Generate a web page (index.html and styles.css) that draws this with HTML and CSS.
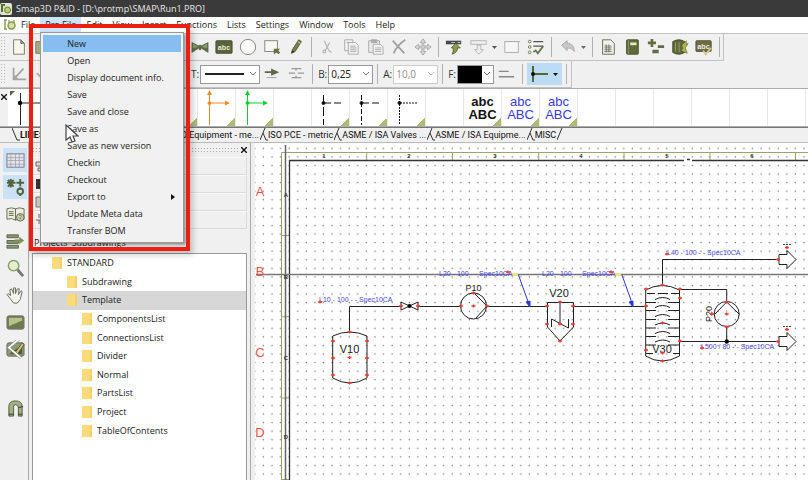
FILE: index.html
```html
<!DOCTYPE html>
<html lang="en">
<head>
<meta charset="utf-8">
<title>Smap3D P&amp;ID</title>
<link rel="stylesheet" href="styles.css">
</head>
<body>
<div class="app">
  <header class="titlebar">
    <svg class="logo" width="12" height="12" viewBox="0 0 12 12"><rect width="12" height="12" rx="2" fill="#dfe5cf"/><path d="M1 2h4M2 2v7" stroke="#5d6b35" stroke-width="2"/><circle cx="7.500" cy="7" r="3" fill="#b9cf6c" stroke="#6c7d35"/></svg>
    <span>Smap3D P&amp;ID - [D:\protmp\SMAP\Run1.PRO]</span>
  </header>

  <nav class="menubar">
    <svg class="logo" width="13" height="12" viewBox="0 0 13 12"><path d="M1 1h3M2 1v9M1 10h3" stroke="#8a9a5a" stroke-width="1.500" fill="none"/><path d="M6 1v3M11 1v3" stroke="#6f7d45"/><circle cx="8.500" cy="6.500" r="3.500" fill="#d5dfa8" stroke="#8a9a4a" stroke-width="1.500"/></svg>
    <button>File</button>
    <div class="menu-root">
      <button class="open">Pro.File</button>
      <div class="menu">
        <button class="active">New</button>
        <button>Open</button>
        <button>Display document info.</button>
        <button>Save</button>
        <button>Save and close</button>
        <button>Save as</button>
        <button>Save as new version</button>
        <button>Checkin</button>
        <button>Checkout</button>
        <button>Export to<svg width="4" height="6" viewBox="0 0 4 6"><path d="M0 0l4 3-4 3z" fill="#111"/></svg></button>
        <button>Update Meta data</button>
        <button>Transfer BOM</button>
      </div>
      <div class="highlight"></div>
      <svg class="cursor" width="14" height="20" viewBox="0 0 14 20"><path d="M1 1v15l4-3 2 5 3-1-2-5h5z" fill="#fff" stroke="#444" stroke-width="1.200"/></svg>
    </div>
    <button>Edit</button>
    <button>View</button>
    <button>Insert</button>
    <button>Functions</button>
    <button>Lists</button>
    <button>Settings</button>
    <button>Window</button>
    <button>Tools</button>
    <button>Help</button>
  </nav>

  <div class="toolbar first">
    <i class="grip"></i>
    <button class="tool" aria-label="New"><svg viewBox="0 0 20 20"><path d="M4 2h8l4 4v12H4z" fill="#f7f7ee" stroke="#74795f"/><path d="M12 2v4h4z" fill="#8d9470" stroke="#74795f"/></svg></button>
    <button class="tool" aria-label="Open"><svg viewBox="0 0 20 20"><path d="M2 4h6l2 2h7v11H2z" fill="#a5ad83" stroke="#6f7650"/></svg></button>
    <i class="gap-wide"></i>
    <button class="tool" aria-label="Valve"><svg viewBox="0 0 20 20"><path d="M1 5l8 4V8h2v1l8-4v11l-8-5v2H9v-2l-8 5z" fill="#5f7049" stroke="#465236" stroke-width=".6"/><path d="M2 6l6 4-6 1zM18 6l-6 4 6 1z" fill="#8b9c75"/></svg></button>
    <button class="tool" aria-label="Text"><svg viewBox="0 0 20 20"><rect x="1" y="3" width="18" height="14" rx="1" fill="#59643c" stroke="#454e2d"/><text x="10" y="13" class="glyph" fill="#e9edd6">abc</text></svg></button>
    <button class="tool" aria-label="Circle"><svg viewBox="0 0 20 20"><circle cx="10" cy="10" r="8.500" fill="#fbfbf8" stroke="#7d8073"/></svg></button>
    <button class="tool" aria-label="Area"><svg viewBox="0 0 20 20"><rect x="2" y="3" width="14" height="12" fill="#f7f7f3" stroke="#7b8072"/><path d="M12 12h7l-2 2 2 2-2 2-2-2-3 2z" fill="#64713f"/></svg></button>
    <button class="tool" aria-label="Pencil"><svg viewBox="0 0 20 20"><path d="M5 17l1-4 7-11 3 2-7 11z" fill="#78814b" stroke="#4c5431"/><path d="M5 17l1-3 2 1z" fill="#222"/><path d="M12 4l3 2" stroke="#ddd"/></svg></button>
    <i class="sep"></i>
    <button class="tool" aria-label="Cut"><svg viewBox="0 0 20 20" fill="none" stroke="#b4b4b4" stroke-width="1.300"><path d="M7 3l5 11M13 5L8 14"/><circle cx="7" cy="15" r="1.500"/><path d="M12 14l3 2"/></svg></button>
    <button class="tool" aria-label="Copy"><svg viewBox="0 0 20 20" fill="#f2f2f2" stroke="#a8a8a8"><path d="M3 2h9v12H3z"/><path d="M7 5h8l3 3v10H7z"/><path d="M9 9h6M9 11h7M9 13h7M9 15h7M5 5h4"/></svg></button>
    <button class="tool" aria-label="Paste"><svg viewBox="0 0 20 20" fill="#e8e8e8" stroke="#a8a8a8"><path d="M3 3h12v13H3z"/><path d="M6 2h6v3H6z" fill="#aaa"/><path d="M8 7h8l3 3v8H8z" fill="#f4f4f4"/><path d="M10 11h7M10 13h7M10 15h7"/></svg></button>
    <button class="tool" aria-label="Delete"><svg viewBox="0 0 20 20" fill="none" stroke="#a0a0a0" stroke-width="2"><path d="M3 3l13 14M17 2Q8 8 4 17"/></svg></button>
    <button class="tool" aria-label="Move"><svg viewBox="0 0 20 20"><path d="M10 1l3 4h-2v4h4V7l4 3-4 3v-2h-4v4h2l-3 4-3-4h2v-4H5v2l-4-3 4-3v2h4V5H7z" fill="#d8d8d8" stroke="#a5a5a5"/></svg></button>
    <i class="sep"></i>
    <button class="tool" aria-label="Import"><svg viewBox="0 0 20 20"><rect x="1" y="3" width="17" height="4" fill="#45484c"/><path d="M7 5h4M14 5h3" stroke="#ccd"/><path d="M12 6l5 5h-3q0 5-6 7 2-3 1-7H7z" fill="#8e9d45" stroke="#59652c"/></svg></button>
    <button class="tool near" aria-label="Export"><svg viewBox="0 0 20 20" fill="#eee" stroke="#b2b2b2"><rect x="1" y="3" width="17" height="4"/><path d="M8 8h4v5h3l-5 5-5-5h3z"/></svg><svg class="caret" viewBox="0 0 5 3"><path d="M0 0h5L2.500 3z" fill="#555"/></svg></button>
    <button class="tool" aria-label="Frame"><svg viewBox="0 0 20 20" fill="#f6f6f6" stroke="#aaa"><rect x="2" y="4" width="15" height="12"/><path d="M2 4h17" stroke-dasharray="2 1"/></svg></button>
    <button class="tool" aria-label="Check list"><svg viewBox="0 0 20 20" fill="none" stroke="#68744b"><circle cx="3" cy="4" r="1.500"/><circle cx="3" cy="10" r="1.500"/><circle cx="3" cy="16" r="1.500"/><path d="M7 4h11M7 9h11M7 15h2" stroke="#555" stroke-width="1.500"/><path d="M9 13l3 4 6-8" stroke-width="2"/></svg></button>
    <i class="sep"></i>
    <button class="tool near" aria-label="Undo"><svg viewBox="0 0 20 20"><path d="M3 8l6-5v3q8 0 8 9-3-5-8-4v3z" fill="#c9c9c9" stroke="#a4a4a4"/></svg><svg class="caret" viewBox="0 0 5 3"><path d="M0 0h5L2.500 3z" fill="#666"/></svg></button>
    <i class="sep"></i>
    <button class="tool" aria-label="Sheet"><svg viewBox="0 0 20 20"><path d="M4 2h9l4 4v12H4z" fill="#f1f1ea" stroke="#5e6350"/><path d="M6 9h8M6 11h8M6 13h8M6 15h8M8 7v9M11 7v9" stroke="#59604d" stroke-width=".8"/></svg></button>
    <button class="tool" aria-label="Catalog"><svg viewBox="0 0 20 20"><rect x="4" y="2" width="13" height="16" rx="1" fill="#5e6b38" stroke="#434d28"/><rect x="8" y="5" width="7" height="3" fill="#e3e7d2"/><path d="M6 2v16" stroke="#8d9a60"/></svg></button>
    <button class="tool" aria-label="Symbols"><svg viewBox="0 0 20 20" fill="#616e40"><path d="M4 1h3v3h3v3H7v3H4V7H1V4h3zM12 8h7v3h-7zM6 13h7v4H6z"/></svg></button>
    <button class="tool" aria-label="Database"><svg viewBox="0 0 20 20"><path d="M2 4q7-4 13 0v12q-6 4-13 0z" fill="#5f6a3b" stroke="#39421f"/><path d="M5 5v10M9 5v11" stroke="#97a373"/><path d="M12 8l5-5v4l2-1-3 5 2 6-7-3 2-2z" fill="#b5b04c" stroke="#4b5424" stroke-width=".6"/></svg></button>
    <button class="tool" aria-label="Spelling"><svg viewBox="0 0 20 20"><rect x="1" y="3" width="17" height="12" rx="1" fill="#6d6a44" stroke="#58552f"/><text x="9.500" y="12" class="glyph" fill="#eee">abc</text><path d="M9 14l3 4 6-7" fill="none" stroke="#d4c689" stroke-width="2"/></svg></button>
    <i class="sep"></i>
  </div>

  <div class="toolbar second">
    <i class="grip"></i>
    <button class="tool" aria-label="Angle"><svg viewBox="0 0 20 20" fill="none" stroke="#a5a5a5" stroke-width="2"><path d="M4 3v13h14M4 16L15 4M8 16l-3-4"/></svg></button>
    <button class="tool" aria-label="Line"><svg viewBox="0 0 20 20" fill="none" stroke="#aaa" stroke-width="2"><path d="M3 9l6 6L18 4"/></svg></button>
    <i class="gap-type"></i>
    <label for="type">T:</label>
    <span class="combo w-type"><select id="type"><option aria-label="Solid"></option></select><svg class="line" viewBox="0 0 39 2"><path d="M0 1h39" stroke="#222" stroke-width="2"/></svg><svg class="chev" viewBox="0 0 6 4"><path d="M0 0l3 3 3-3" fill="none" stroke="#777"/></svg></span>
    <button class="tool arrow" aria-label="Line start"><svg viewBox="0 0 20 20"><path d="M2 7h7V4l9 4-9 4V9H2z" fill="#5c6745"/><path d="M4 14h11" stroke="#999"/></svg></button>
    <button class="tool" aria-label="Line gaps"><svg viewBox="0 0 20 20" fill="none" stroke="#999" stroke-width="1.500"><path d="M5 4h11M2 9h7M12 9h7M5 14h11M10 4v2M10 12v3"/></svg></button>
    <i class="sep"></i>
    <label for="width">B:</label>
    <span class="combo"><select id="width"><option>0,25</option></select><svg class="chev" viewBox="0 0 6 4"><path d="M0 0l3 3 3-3" fill="none" stroke="#777"/></svg></span>
    <i class="sep"></i>
    <label for="height">A:</label>
    <span class="combo off"><select id="height" disabled><option>10,0</option></select><svg class="chev" viewBox="0 0 6 4"><path d="M0 0l3 3 3-3" fill="none" stroke="#bbb"/></svg></span>
    <i class="sep"></i>
    <label for="color">F:</label>
    <span class="combo w-color"><select id="color"><option aria-label="Black"></option></select><i class="swatch"></i><svg class="chev" viewBox="0 0 6 4"><path d="M0 0l3 3 3-3" fill="none" stroke="#777"/></svg></span>
    <button class="tool" aria-label="Offset"><svg viewBox="0 0 20 20" stroke="#888" stroke-width="1.500"><path d="M2 7h11M2 13h17"/></svg></button>
    <i class="sep"></i>
    <button class="split" aria-label="Connection"><svg width="18" height="16" viewBox="0 0 18 16"><path d="M3 0v16M3 8h15" stroke="#556536" stroke-width="2"/><circle cx="3" cy="8" r="2" fill="#111"/></svg><svg class="caret" viewBox="0 0 5 3"><path d="M0 0h5L2.500 3z" fill="#111"/></svg></button>
    <i class="sep"></i>
  </div>

  <div class="palette">
    <button class="close" aria-label="Close palette"><svg width="6" height="6" viewBox="0 0 6 6"><path d="M0 0l6 6M6 0L0 6" stroke="#111" stroke-width="1.300"/></svg></button>
    <div class="cells">
      <button class="cell" aria-label="Line"><svg viewBox="0 0 38 38"><path d="M2 2h5l-5 5z" fill="#5d6643"/><path d="M12.500 4v32M12 14h20" stroke="#222"/><circle cx="12" cy="14" r="2.200"/></svg></button>
      <button class="cell"></button>
      <button class="cell"></button>
      <button class="cell"></button>
      <button class="cell marked"></button>
      <button class="cell marked" aria-label="Orange line"><svg viewBox="0 0 38 38" stroke="#f08a24" fill="#f08a24"><path d="M11.500 6v30M11 14h17"/><path d="M11.500 1l2.500 5H9zM32 14l-5-2.500v5z" stroke="none"/><circle cx="11.500" cy="14" r="1.500"/></svg></button>
      <button class="cell marked" aria-label="Green line"><svg viewBox="0 0 38 38" stroke="#0cce2c" fill="#0cce2c"><path d="M11.500 6v30M11 14h17"/><path d="M11.500 1l2.500 5H9zM32 14l-5-2.500v5z" stroke="none"/><circle cx="11.500" cy="14" r="1.500"/></svg></button>
      <button class="cell"></button>
      <button class="cell marked" aria-label="Long dash line"><svg viewBox="0 0 38 38" stroke="#111"><path d="M11.500 6v30" stroke-dasharray="9 3"/><path d="M12 14h17" stroke-dasharray="7 3"/><circle cx="11.500" cy="14" r="1.500"/></svg></button>
      <button class="cell marked" aria-label="Dash line"><svg viewBox="0 0 38 38" stroke="#111"><path d="M11.500 6v30" stroke-dasharray="5 2"/><path d="M12 14h17" stroke-dasharray="7 3"/><circle cx="11.500" cy="14" r="1.500"/></svg></button>
      <button class="cell marked" aria-label="Dotted line"><svg viewBox="0 0 38 38" stroke="#111"><path d="M11.500 6v30M12 14h17" stroke-dasharray="2 1"/><circle cx="11.500" cy="14" r="1.500"/></svg></button>
      <button class="cell"></button>
      <button class="cell marked word bold">abc<br>ABC</button>
      <button class="cell marked word blue">abc<br>ABC</button>
      <button class="cell marked word blue">abc<br>ABC</button>
      <button class="cell"></button><button class="cell"></button><button class="cell"></button><button class="cell"></button><button class="cell"></button><button class="cell"></button>
    </div>
  </div>

  <div class="tabs">
    <svg class="slope" viewBox="0 0 8 13"><path d="M0 0l5 12h3" fill="none" stroke="#333"/></svg>
    <button class="tab lines"><b>LINES</b></button>
    <button class="tab">ISO Equipment - me...</button>
    <svg class="slope" viewBox="0 0 8 13"><path d="M0 12L5 0M3 5l3 7h2" fill="none" stroke="#333"/></svg>
    <button class="tab">ISO PCE - metric</button>
    <svg class="slope" viewBox="0 0 8 13"><path d="M0 12L5 0M3 5l3 7h2" fill="none" stroke="#333"/></svg>
    <button class="tab">ASME / ISA Valves ...</button>
    <svg class="slope" viewBox="0 0 8 13"><path d="M0 12L5 0M3 5l3 7h2" fill="none" stroke="#333"/></svg>
    <button class="tab">ASME / ISA Equipme...</button>
    <svg class="slope" viewBox="0 0 8 13"><path d="M0 12L5 0M3 5l3 7h2" fill="none" stroke="#333"/></svg>
    <button class="tab">MISC</button>
    <svg class="slope" viewBox="0 0 8 13"><path d="M0 12L5 0" fill="none" stroke="#333"/></svg>
  </div>

  <main class="work">
    <aside class="rail">
      <button class="on" aria-label="Grid"><svg viewBox="0 0 20 20"><rect x="1" y="3" width="18" height="14" fill="#e3e3ec" stroke="#777a82"/><path d="M1 7h18M1 10h18M1 14h18M5 3v14M10 3v14M14 3v14" stroke="#a0a0aa" stroke-width=".8"/></svg></button>
      <button class="on" aria-label="Snap"><svg viewBox="0 0 20 20" fill="none" stroke="#52633c" stroke-width="2"><path d="M5 1v9M1 5h9M2 2l6 7M8 2L2 9M15 1v8M11 5h8" /><circle cx="15" cy="14" r="3"/><path d="M15 10v2M15 17v2"/></svg></button>
      <button aria-label="Help"><svg viewBox="0 0 20 20" fill="#eceddf" stroke="#646b51"><path d="M1 4q5-2 9 0 4-2 9 0v11q-5-2-9 1-4-3-9-1z"/><path d="M10 4v12M3 7h5M3 9h5M3 11h5"/><circle cx="15" cy="13" r="4" fill="#c7cdaa"/><path d="M14 11q2-1 2 1l-1 1v2"/></svg></button>
      <button aria-label="Insert row"><svg viewBox="0 0 20 20"><path d="M1 3h12v3H1zM1 9h12v3H1zM1 14h12v3H1z" fill="#8b967a" stroke="#5c6748"/><path d="M9 8h5V5l5 4-5 4v-3H9z" fill="#7b9050"/></svg></button>
      <button aria-label="Zoom"><svg viewBox="0 0 20 20"><path d="M12 11l6 7" stroke="#777" stroke-width="3"/><circle cx="8" cy="7" r="5.500" fill="#e5efc8" stroke="#8c9a72" stroke-width="1.500"/></svg></button>
      <button aria-label="Pan"><svg viewBox="0 0 20 20"><path d="M5 14L1 9l1-1 3 2-1-6 2-1 2 5V2h2v6l2-5h2l-1 6 3-4 1 1-2 8-3 4H8z" fill="#f4f4ec" stroke="#686d5b"/></svg></button>
      <button aria-label="View"><svg viewBox="0 0 20 20"><rect x="1" y="3" width="18" height="14" rx="2" fill="#6b7a50" stroke="#777"/><path d="M3 5h14v3L3 14z" fill="#b3c48b"/></svg></button>
      <button aria-label="Edit view"><svg viewBox="0 0 20 20"><rect x="1" y="3" width="18" height="14" rx="2" fill="#8c9c70" stroke="#666"/><path d="M3 15L17 5v10z" fill="#4f5e38"/><path d="M9 14L17 3l2 2-7 10z" fill="#d7c070" stroke="#555"/><path d="M15-2L3 8l13 11" fill="none" stroke="#888" stroke-width="3"/><path d="M15-2L3 8l13 11" fill="none" stroke="#fff" stroke-width="1.800"/></svg></button>
      <button class="apart" aria-label="Magnet"><svg viewBox="0 0 20 20"><path d="M3 18V8q0-6 7-6t7 6v10h-4V9q0-3-3-3T8 9v9z" fill="#a6b085" stroke="#515b3b"/><path d="M3 16h5M13 16h4M13 9l5-1" stroke="#333"/></svg></button>
    </aside>

    <section class="panel">
      <div class="panel-head"><i></i><button aria-label="Close panel"><svg width="6" height="6" viewBox="0 0 7 7"><path d="M0 0l7 7M7 0L0 7" stroke="#111" stroke-width="1.600"/></svg></button></div>
      <div class="strip"><svg width="8" height="12" viewBox="0 0 8 12"><path d="M1 2h5v4H1zM3 8h5v3H3z" fill="#ddd" stroke="#666"/></svg></div>
      <div class="strip"><svg width="8" height="12" viewBox="0 0 8 12"><path d="M1 1h7v10H1z" fill="#333"/></svg></div>
      <div class="strip"><svg width="8" height="12" viewBox="0 0 8 12"><path d="M1 1h7v10H1z" fill="#c4c9b9" stroke="#777"/></svg></div>
      <div class="strip"><svg width="8" height="12" viewBox="0 0 8 12"><path d="M4 0v4M1 6h7M4 6v4" stroke="#666" fill="none"/></svg></div>
      <div class="panel-tabs"><button>Projects</button><button class="current">Subdrawings</button></div>
      <ul class="tree">
        <li><i></i>STANDARD</li>
        <li class="l1"><i></i>Subdrawing</li>
        <li class="l1 sel"><i></i>Template</li>
        <li class="l2"><i></i>ComponentsList</li>
        <li class="l2"><i></i>ConnectionsList</li>
        <li class="l2"><i></i>Divider</li>
        <li class="l2"><i></i>Normal</li>
        <li class="l2"><i></i>PartsList</li>
        <li class="l2"><i></i>Project</li>
        <li class="l2"><i></i>TableOfContents</li>
      </ul>
    </section>

    <section class="sheet">
      <svg class="drawing" width="100%" height="100%">
        <defs>
          <pattern id="dots" x="293.600" y="169.700" width="8.580" height="8.570" patternUnits="userSpaceOnUse"><rect x="3.500" y="3.700" width="1.300" height="1.300" fill="#777"/></pattern>
          <g id="port"><path d="M-2 0h4M0-1.500v3" stroke="#f03a30" stroke-width="1.300"/></g>
          <g id="flag"><path d="M-8-5H0v-4l9 9-9 9V5h-8z" fill="#fff" stroke="#222"/><path d="M-4-15h8" stroke="#444" stroke-dasharray="2 1"/><use href="#port" y="-12"/><use href="#port" x="-9"/></g>
          <g id="tray" fill="none" stroke="#222"><path d="M646 0h10M668 0h11M655-3q8-4 15 0"/></g>
        </defs>
        <g transform="translate(-255 -145)">
          <rect x="255" y="145" width="4000" height="4000" fill="url(#dots)"/>
          <path d="M281.500 4000V152.500H4000M366.700 152v8M452.500 152v8M538.700 152v8M624 152v8M710 152v8M795.500 152v8M282 235.500h7M282 316.700h7M282 398h7M282 479.500h7" fill="none" stroke="#9da36c"/>
          <path d="M285.500 145V4000" stroke="#666" stroke-width="1.500"/>
          <path d="M289.500 4000V160.500H684M692 160.500H4000M687 159.500h3" fill="none" stroke="#333" stroke-width="1.300"/>
          <path d="M256 274.500H4000" stroke="#777" stroke-width="1.600"/>
          <g class="num"><text x="324" y="158">1</text><text x="409" y="158">2</text><text x="495" y="158">3</text><text x="581" y="158">4</text><text x="667" y="158">5</text><text x="752" y="158">6</text><text x="286" y="197">A</text><text x="286" y="279">B</text><text x="286" y="360">C</text><text x="286" y="439">D</text></g>
          <g class="zone"><text x="260" y="196">A</text><text x="260" y="276">B</text><text x="260" y="357">C</text><text x="260" y="437">D</text></g>

          <g fill="none" stroke="#222">
            <path d="M349.500 332V306.500H401M418 306.500H461M486 306.500H547M573 306.500H646M662.500 285V259.500H778M680 289.500H726.700V302M726.700 327V341.500M680 341.500H778"/>
            <path d="M332.700 336V378Q350 388 367 378V336Q350 328 332.700 336z"/>
            <path d="M401 302v8l17-8v8z"/>
            <circle cx="473.500" cy="306" r="13"/><path d="M474 293l13 13-11 12"/>
            <path d="M547.500 327V302.500H573.500V327L560 341zM560 302v22M551.500 327v-8l17 9v-9"/>
            <path d="M645.700 290V356Q662 366 679.500 356V290Q662 281 645.700 290zM647 293.500h8M658 293.500h10M671 293.500h8"/>
            <circle cx="726.700" cy="314" r="12.500"/><path d="M715 314l11.700-12L739 314"/>
          </g>
          <use href="#tray" y="302.500"/><use href="#tray" y="310.500"/><use href="#tray" y="319.500"/><use href="#tray" y="328"/><use href="#tray" y="336.500"/><use href="#tray" y="345"/>
          <path d="M646 353.500h7M673 353.500h6" stroke="#222"/>
          <circle cx="409.500" cy="306" r="2"/><circle cx="726.700" cy="341.500" r="2.200"/>
          <use href="#flag" x="787" y="259.500"/><use href="#flag" x="787" y="341.500"/>
          <g stroke="#2b35d8" fill="#2b35d8"><path d="M518.500 275l10 28M622 275l10 28"/><path d="M530 307l-4-5 4-1zM633 307l-4-5 4-1z"/></g>
          <path d="M511 274.500h7M614 274.500h7" stroke="#f6e36b" stroke-width="2"/>
          <g class="spec"><text x="319" y="302">L10 - 100 - - Spec10CA</text><text x="439" y="276">L20 - 100 - - Spec10CA</text><text x="542" y="276">L20 - 100 - - Spec10CA</text><text x="667" y="255">L40 - 100 - - Spec10CA</text><text x="701" y="349">L500 / 80 - - Spec10CA</text></g>
          <g class="tag"><text x="349.500" y="353">V10</text><text x="559" y="297">V20</text><text x="662" y="353">V30</text><text class="small" x="473.500" y="291">P10</text><text class="small" transform="translate(712 314) rotate(-90)">P20</text></g>
          <g>
            <use href="#port" x="349.500" y="332"/><use href="#port" x="333" y="341"/><use href="#port" x="367" y="341"/><use href="#port" x="333" y="358"/><use href="#port" x="367" y="358"/><use href="#port" x="333" y="375"/><use href="#port" x="367" y="375"/><use href="#port" x="349.500" y="383"/><use href="#port" x="349.500" y="357.500"/>
            <use href="#port" x="401" y="306"/><use href="#port" x="418" y="306"/><use href="#port" x="461" y="306"/><use href="#port" x="473.500" y="306"/><use href="#port" x="487" y="306"/><use href="#port" x="473.500" y="293"/>
            <use href="#port" x="547" y="306"/><use href="#port" x="573" y="306"/><use href="#port" x="547" y="324"/><use href="#port" x="573" y="324"/><use href="#port" x="560" y="302"/><use href="#port" x="560" y="324"/><use href="#port" x="560" y="341"/>
            <use href="#port" x="662.500" y="285"/><use href="#port" x="646" y="289"/><use href="#port" x="680" y="289"/><use href="#port" x="680" y="298"/><use href="#port" x="646" y="306"/><use href="#port" x="662.500" y="323"/><use href="#port" x="680" y="341"/><use href="#port" x="646" y="350"/><use href="#port" x="662.500" y="353"/><use href="#port" x="662.500" y="361"/>
            <use href="#port" x="726.700" y="302"/><use href="#port" x="726.700" y="314"/><use href="#port" x="726.700" y="327"/><use href="#port" x="712" y="314"/>
            <use href="#port" x="320" y="302"/><use href="#port" x="508" y="272"/><use href="#port" x="611" y="272"/><use href="#port" x="667" y="254"/><use href="#port" x="702" y="348"/>
          </g>
        </g>
      </svg>
    </section>
  </main>
</div>
</body>
</html>
```
FILE: styles.css
```css
* { box-sizing: border-box; }
body { margin: 0; font: 9px/16px "Open Sans", "Noto Sans", sans-serif; color: #222; }
button { margin: 0; padding: 0; border: 0; background: none; font: inherit; color: inherit; }
svg { display: block; flex: none; }
.app { display: flex; flex-direction: column; height: 100vh; background: #f0f0f0; overflow: hidden; }

.titlebar { display: flex; align-items: center; gap: 4px; height: 17px; background: #3a3a3a; color: #e8e8e8; flex: none; }
.menubar { display: flex; align-items: stretch; height: 17px; padding-left: 3px; background: #fff; border-bottom: 1px solid #c4c4c4; flex: none; }
.menubar > .logo { margin-top: 2px; }
.menubar > button, .menu-root > button { padding: 0 5px; }
.menu-root { position: relative; display: flex; }
.menu-root .open { background: #cce4f7; }

.menu { position: absolute; z-index: 5; top: 15px; left: 0; width: 144px; padding: 2px 2px 3px; display: flex; flex-direction: column; background: #f1f1f1; border: 1px solid #9a9a9a; box-shadow: 2px 2px 3px #0006; }
.menu button { display: flex; align-items: center; justify-content: space-between; height: 17px; padding: 0 6px 0 24px; text-align: left; white-space: nowrap; }
.menu .active { background: #86bef2; }
.highlight { position: absolute; z-index: 6; top: 7px; left: -11px; width: 161px; height: 227px; border: 4px solid #ee1d12; box-shadow: 3px 4px 6px #0003; pointer-events: none; }
.cursor { position: absolute; z-index: 7; top: 107px; left: 25px; }

.toolbar { display: flex; align-items: center; align-self: flex-start; height: 27px; flex: none; border: solid #c2c2c2; border-width: 0 1px 1px 0; }
.grip { width: 7px; height: 22px; flex: none; background: radial-gradient(circle, #bbb 1px, transparent 1px) 0 0 / 3px 3px; }
.tool { display: flex; align-items: center; justify-content: center; width: 24px; height: 24px; flex: none; }
.tool svg { width: 18px; height: 18px; }
.tool.near { width: 34px; gap: 4px; }
.caret, .tool .caret { width: 5px; height: 3px; }
.glyph { font: bold 8px "Liberation Sans", sans-serif; text-anchor: middle; }
.sep { width: 1px; height: 20px; margin: 0 3px; background: #b0b0b0; flex: none; }
.gap-wide { width: 133px; }
.gap-type { width: 135px; }
.second { color: #333; }
.second .sep { margin: 0 4px; }
.second label { font-size: 10px; padding: 0 1px; }
.combo { display: grid; align-items: center; width: 45px; height: 19px; border: 1px solid #999; background: #fff; }
.combo > * { grid-area: 1 / 1; }
.combo select { appearance: none; width: 100%; height: 17px; border: 0; padding: 0 2px; margin: 0; background: none; color: #222; font: 10px/16px "Noto Sans", sans-serif; }
.combo.off { border-color: #ccc; }
.combo.off select { color: #999; opacity: 1; }
.combo .line { width: 39px; height: 2px; margin-left: 4px; }
.combo .chev { width: 6px; height: 4px; justify-self: end; margin-right: 3px; }
.combo.w-type { width: 60px; }
.combo.w-color { width: 37px; }
.swatch { width: 24px; height: 17px; background: #000; }
.split { display: flex; align-items: center; justify-content: center; gap: 5px; width: 35px; height: 22px; background: #bcdcf6; }

.palette { display: flex; height: 39px; flex: none; background: #fff; border: solid #aaa; border-width: 1px 0; overflow: hidden; }
.close { width: 8px; flex: none; background: #f0f0f0; display: flex; justify-content: center; padding-top: 5px; }
.cells { display: flex; }
.cell { width: 38px; flex: none; border-right: 1px solid #e8e8e8; }
.cell svg { width: 38px; height: 38px; }
.marked { background: linear-gradient(135deg, transparent 50%, #b0ba74 50%) right bottom / 8px 8px no-repeat; }
.word { font: 13px/13px "Liberation Sans", sans-serif; }
.bold { font-weight: bold; color: #111; }
.blue { color: #3a3adf; }

.tabs { display: flex; height: 15px; padding-left: 12px; flex: none; border-top: 1px solid #777; font: 9px/12px Roboto, "Liberation Sans", sans-serif; color: #111; }
.tab { height: 13px; padding: 0 1px 0 0; white-space: nowrap; }
.tab.lines { width: 153px; text-align: left; }
.slope { width: 8px; height: 13px; }

.work { display: flex; flex: 1; min-height: 0; border-top: 1px solid #bbb; }
.rail { display: flex; flex-direction: column; gap: 3px; width: 29px; padding: 5px 2px 0 3px; flex: none; border-right: 1px solid #aaa; }
.rail button { display: flex; align-items: center; justify-content: center; width: 24px; height: 24px; flex: none; }
.rail button svg { width: 19px; height: 19px; }
.rail .on { background: #cbe2f6; }
.rail .apart { margin-top: 32px; }
.panel { display: flex; flex-direction: column; width: 222px; padding: 0 3px; flex: none; border-right: 1px solid #aaa; }
.panel-head { display: flex; align-items: center; gap: 3px; height: 14px; flex: none; }
.panel-head i { flex: 1; height: 6px; background: radial-gradient(circle, #aaa 1px, transparent 1px) 0 0 / 3px 3px; }
.strip { height: 18px; padding: 2px; flex: none; border: 1px solid #dadada; border-top-color: #fafafa; }
.panel-tabs { display: flex; align-items: flex-start; gap: 4px; height: 24px; padding: 6px 2px 0; flex: none; }
.tree { flex: 1; display: grid; grid-template-rows: repeat(10, minmax(16px, 1fr)); min-height: 0; margin: 0; padding: 0 0 40px; list-style: none; background: #fff; border: 1px solid #999; border-bottom: 0; }
.tree li { display: flex; align-items: center; gap: 5px; padding-left: 19px; }
.tree .l1 { padding-left: 34px; }
.tree .l2 { padding-left: 49px; }
.tree .sel { background: #d7d7d7; }
.tree i { width: 10px; height: 12px; background: #fadb7c; border-right: 2px solid #f5d068; }
.sheet { flex: 1; min-width: 0; margin-left: 4px; padding-top: 2px; background: #fff; }
.drawing { overflow: hidden; }
.num { font: bold 6px "Liberation Sans", sans-serif; text-anchor: middle; fill: #333; }
.zone { font: 13px "Liberation Sans", sans-serif; text-anchor: middle; fill: #ee5548; }
.spec { font: 7px "Liberation Sans", sans-serif; fill: #4747e0; }
.tag { font: 11px "Liberation Sans", sans-serif; text-anchor: middle; fill: #222; }
.tag .small { font-size: 9px; }
```
